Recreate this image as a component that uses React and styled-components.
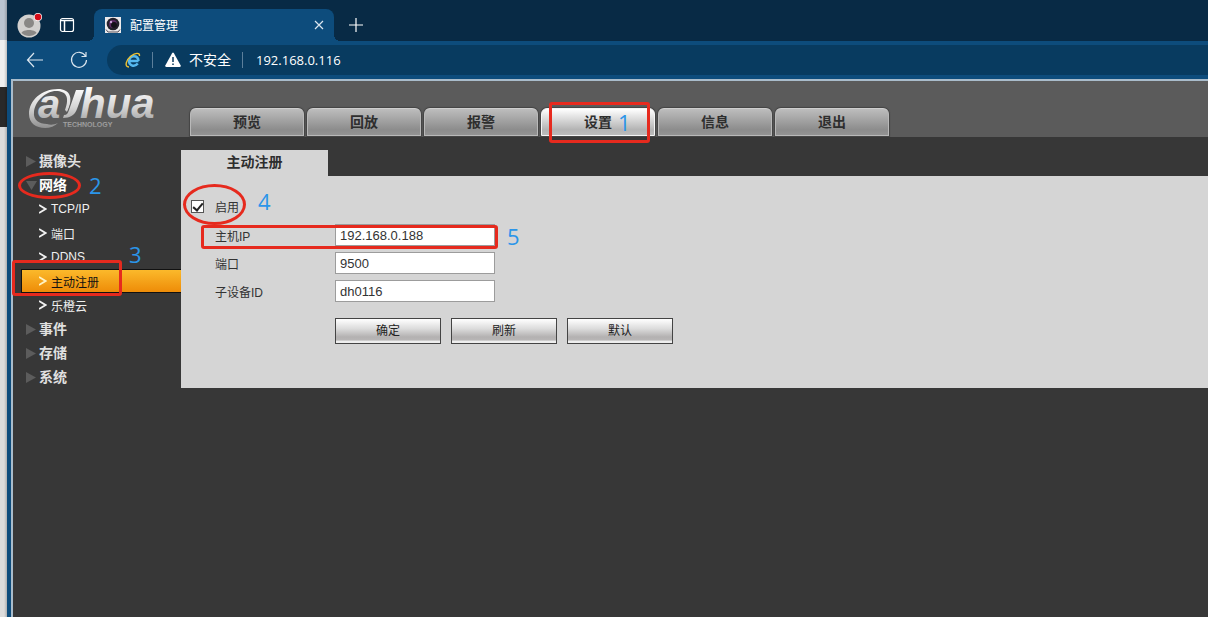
import React, { useState } from 'react';
import styled, { createGlobalStyle, css } from 'styled-components';

const NAV_ITEMS = ['预览', '回放', '报警', '设置', '信息', '退出'];

const MENU = [
  { label: '摄像头' },
  { label: '网络', open: true, children: ['TCP/IP', '端口', 'DDNS', '主动注册', '乐橙云'] },
  { label: '事件' },
  { label: '存储' },
  { label: '系统' },
];

const Logo = () => (
  <svg width="140" height="56" viewBox="0 -6 140 56" role="img" aria-label="alhua technology">
    <defs>
      <linearGradient id="metal" gradientUnits="userSpaceOnUse" x1="0" y1="2" x2="0" y2="42">
        <stop offset="0" stopColor="#fafafa" />
        <stop offset="0.45" stopColor="#d6d6d6" />
        <stop offset="1" stopColor="#8c8c8c" />
      </linearGradient>
    </defs>
    <g fill="url(#metal)" fontWeight="700" fontStyle="italic">
      <path d="M39 25C46 11 42 2 30 2C14 2 1 13 1 27C1 36 8 41 17 41C22 41 27 39 30 36C26 38 22 38 19 37C11 37 5 33 6 25C7 14 18 4 28 4C38 4 42 10 37 23Z" />
      <text x="10" y="31" fontSize="40">a</text>
      <text x="52" y="31" fontSize="42">hua</text>
      <path d="M48 3H56L49 22C47 28 42 31 35 31L36 28C39 28 40 26 41 23Z" stroke="#5b5b5b" strokeWidth="1.500" paintOrder="stroke" />
      <text x="35" y="40" fontSize="7" fontStyle="normal">TECHNOLOGY</text>
    </g>
  </svg>
);

const Profile = () => (
  <svg width="26" height="26" viewBox="0 0 26 26" aria-hidden="true">
    <circle cx="13" cy="14" r="11.500" fill="#d2d0ce" />
    <circle cx="13" cy="11" r="5" fill="#8a8886" />
    <path d="M5.500 21C6.500 17 19.500 17 20.500 21C16.500 25 9.500 25 5.500 21Z" fill="#8a8886" />
    <circle cx="22" cy="5" r="4" fill="#fff" />
    <circle cx="22" cy="5" r="3.300" fill="#d60b18" />
  </svg>
);

const TabPane = () => (
  <svg width="16" height="16" viewBox="0 0 16 16" fill="none" stroke="#fff" aria-hidden="true">
    <rect x="1.500" y="1.500" width="13" height="13" rx="2" strokeWidth="1.200" />
    <path d="M1.500 3.500H14.500M5.500 4V14" strokeWidth="1.500" />
  </svg>
);

const CameraIcon = () => (
  <svg width="16" height="16" viewBox="0 0 16 16" aria-hidden="true">
    <rect width="16" height="16" fill="#eceaec" />
    <circle cx="8" cy="7" r="6.300" fill="#24202a" />
    <circle cx="8" cy="7" r="4" fill="#5b2a63" />
    <circle cx="9" cy="8" r="3" fill="#141018" />
    <circle cx="6" cy="5" r="1.200" fill="#c9a0d8" />
    <path d="M1 12.500L3 15H13L15 12.500" stroke="#55505a" fill="none" />
  </svg>
);

const IeIcon = () => (
  <svg width="16" height="16" viewBox="0 0 16 16" fill="none" aria-hidden="true">
    <path d="M13.500 9H4.500M12.800 11.500C9 16 3.500 13 4.200 8.500C5 3 13 2.500 13.500 9" stroke="#56b8ee" strokeWidth="2.500" />
    <path d="M4 15C-1 15 1 8 6 4C10 1 15 0 14.500 4" stroke="#f0c230" strokeWidth="1.400" />
  </svg>
);

const WarningIcon = () => (
  <svg width="16" height="16" viewBox="0 0 16 16" aria-hidden="true">
    <path d="M7.200 1Q8 0 8.800 1L15.700 13.500Q16 15 14.500 15H1.500Q0 15 .3 13.500Z" fill="#fff" />
    <path d="M8 5V10M8 11.500V13" stroke="#0a3a5e" strokeWidth="1.500" />
  </svg>
);

const BackIcon = () => (
  <svg width="18" height="16" viewBox="0 0 18 16" fill="none" stroke="#dbe6ef" strokeWidth="1.200" aria-hidden="true">
    <path d="M17 8H1.500M8 1L1.500 8L8 15" />
  </svg>
);

const ReloadIcon = () => (
  <svg width="18" height="18" viewBox="0 0 18 18" fill="none" stroke="#dbe6ef" strokeWidth="1.200" aria-hidden="true">
    <path d="M15.500 5A7.500 7.500 0 1 0 16.500 9M16 1V5.500H11.500" />
  </svg>
);

const CloseIcon = () => (
  <svg width="10" height="10" viewBox="0 0 10 10" stroke="#dbe6ef" strokeWidth="1.200" aria-hidden="true">
    <path d="M1 1L9 9M9 1L1 9" />
  </svg>
);

const PlusIcon = () => (
  <svg width="14" height="14" viewBox="0 0 14 14" stroke="#fff" strokeWidth="1.200" aria-hidden="true">
    <path d="M7 0V14M0 7H14" />
  </svg>
);

const Chevron = () => (
  <svg width="8" height="10" viewBox="0 0 8 10" fill="none" stroke="currentColor" strokeWidth="1.800" aria-hidden="true">
    <path d="M0 1L6.500 5L0 9" />
  </svg>
);

const Triangle = ({ open }) => (
  <svg width="11" height="16" viewBox="0 0 11 16" fill="#5c5c5c" aria-hidden="true">
    <path d={open ? 'M0 5H11L5.500 14Z' : 'M0 4L10 9.500L0 15Z'} />
  </svg>
);

const App = () => {
  const [page, setPage] = useState('设置');
  const [section, setSection] = useState('主动注册');
  const [enabled, setEnabled] = useState(true);
  const [form, setForm] = useState({ host: '192.168.0.188', port: '9500', device: 'dh0116' });

  const handleChange = (e) => setForm({ ...form, [e.target.name]: e.target.value });

  return (
    <>
      <GlobalStyle />
      <Desktop>
        <Backdrop />
        <BrowserWindow>
          <TabStrip>
            <IconButton aria-label="profile" $width={32}><Profile /></IconButton>
            <IconButton aria-label="tabs" $width={44}><TabPane /></IconButton>
            <BrowserTab>
              <CameraIcon />
              <TabTitle>配置管理</TabTitle>
              <IconButton aria-label="close" $width={30}><CloseIcon /></IconButton>
            </BrowserTab>
            <IconButton aria-label="new tab" $width={44}><PlusIcon /></IconButton>
          </TabStrip>
          <Toolbar>
            <IconButton aria-label="back" $width={44}><BackIcon /></IconButton>
            <IconButton aria-label="reload" $width={44}><ReloadIcon /></IconButton>
            <AddressBar>
              <IeIcon />
              <Separator />
              <WarningIcon />
              <Unsafe>不安全</Unsafe>
              <Separator />
              <Address>192.168.0.116</Address>
            </AddressBar>
          </Toolbar>

          <Page>
            <Header>
              <LogoBox><Logo /></LogoBox>
              <Nav>
                {NAV_ITEMS.map((item) => (
                  <NavTab key={item} $active={item === page} onClick={() => setPage(item)}>
                    {item}
                    {item === '设置' && (
                      <>
                        <Outline $left={7} $top={-7} $width={101} $height={41} />
                        <Step $left={76} $top={-1}>1</Step>
                      </>
                    )}
                  </NavTab>
                ))}
              </Nav>
            </Header>

            <Body>
              <Sidebar>
                {MENU.map((group) => (
                  <React.Fragment key={group.label}>
                    <MenuGroup $open={group.open}>
                      <Triangle open={group.open} />
                      {group.label}
                      {group.open && (
                        <>
                          <Outline $round $left={5} $top={-1} $width={63} $height={27} />
                          <Step $left={76} $top={-2}>2</Step>
                        </>
                      )}
                    </MenuGroup>
                    {group.children?.map((child) => (
                      <MenuItem key={child} $active={child === section} onClick={() => setSection(child)}>
                        <Chevron />
                        {child}
                        {child === '主动注册' && (
                          <>
                            <Outline $left={-10} $top={-10} $width={110} $height={36} />
                            <Step $left={107} $top={-30}>3</Step>
                          </>
                        )}
                      </MenuItem>
                    ))}
                  </React.Fragment>
                ))}
              </Sidebar>

              <Content>
                <PanelTab>主动注册</PanelTab>
                <Panel>
                  <EnableRow>
                    <Checkbox
                      id="enable"
                      type="checkbox"
                      checked={enabled}
                      onChange={(e) => setEnabled(e.target.checked)}
                    />
                    <label htmlFor="enable">启用</label>
                    <Outline $round $left={2} $top={-7} $width={63} $height={41} />
                    <Step $left={77} $top={-4}>4</Step>
                  </EnableRow>
                  <Row>
                    <Label htmlFor="host">主机IP</Label>
                    <TextInput id="host" name="host" value={form.host} onChange={handleChange} />
                    <Outline $left={20} $top={4} $width={297} $height={24} />
                    <Step $left={326} $top={1}>5</Step>
                  </Row>
                  <Row>
                    <Label htmlFor="port">端口</Label>
                    <TextInput id="port" name="port" value={form.port} onChange={handleChange} />
                  </Row>
                  <Row>
                    <Label htmlFor="device">子设备ID</Label>
                    <TextInput id="device" name="device" value={form.device} onChange={handleChange} />
                  </Row>
                  <Actions>
                    <Button type="button">确定</Button>
                    <Button type="button">刷新</Button>
                    <Button type="button">默认</Button>
                  </Actions>
                </Panel>
              </Content>
            </Body>
          </Page>
        </BrowserWindow>
      </Desktop>
    </>
  );
};

export default App;

// Styled Components
const GlobalStyle = createGlobalStyle`
  * {
    box-sizing: border-box;
  }

  body {
    margin: 0;
    background: #373737;
    font-family: 'Liberation Sans', 'Noto Sans CJK SC', sans-serif;
    font-size: 12px;
  }

  button,
  input {
    font: inherit;
  }

  svg {
    display: block;
    flex: none;
  }
`;

const Desktop = styled.div`
  display: flex;
  min-height: 100vh;
  overflow: hidden;
`;

const Backdrop = styled.div`
  flex: none;
  width: 7px;
  background:
    linear-gradient(to right, transparent 4px, rgba(0, 0, 0, 0.2)),
    linear-gradient(#bcc5d1 40px, #efefef 40px, #efefef 87px, #292929 87px, #292929 127px, #dcdcdc 127px);
`;

const BrowserWindow = styled.div`
  flex: 1;
  min-width: 0;
  display: flex;
  flex-direction: column;
  background: #0d4c7c;
`;

const TabStrip = styled.div`
  display: flex;
  align-items: flex-end;
  height: 41px;
  padding-left: 6px;
  background: #082a45;
`;

const IconButton = styled.button`
  flex: none;
  display: flex;
  align-items: center;
  justify-content: center;
  width: ${({ $width }) => $width}px;
  height: 32px;
  padding: 0;
  border: none;
  background: none;
  cursor: pointer;
`;

const BrowserTab = styled.div`
  position: relative;
  display: flex;
  align-items: center;
  width: 240px;
  height: 32px;
  margin-left: 5px;
  padding-left: 11px;
  border-radius: 8px 8px 0 0;
  background: #0d4c7c;
  color: #fff;

  &::before,
  &::after {
    content: '';
    position: absolute;
    bottom: 0;
    width: 6px;
    height: 6px;
  }

  &::before {
    right: 100%;
    background: radial-gradient(circle at 0 0, transparent 6px, #0d4c7c 6px);
  }

  &::after {
    left: 100%;
    background: radial-gradient(circle at 100% 0, transparent 6px, #0d4c7c 6px);
  }
`;

const TabTitle = styled.span`
  flex: 1;
  margin-left: 9px;
  padding-bottom: 2px;
`;

const Toolbar = styled.div`
  display: flex;
  align-items: center;
  height: 38px;
  padding-left: 6px;
`;

const AddressBar = styled.div`
  flex: 1;
  display: flex;
  align-items: center;
  height: 30px;
  margin-left: 6px;
  padding-left: 18px;
  border-radius: 15px 0 0 15px;
  background: #083b60;
  color: #fff;
`;

const Separator = styled.span`
  width: 1px;
  height: 16px;
  margin: 0 12px 0 11px;
  background: #5c7f9b;
`;

const Unsafe = styled.span`
  margin-left: 8px;
  padding-bottom: 2px;
  font-size: 14px;
`;

const Address = styled.span`
  padding-left: 1px;
  font-family: 'Open Sans', sans-serif;
  font-size: 13px;
`;

const Page = styled.div`
  flex: 1;
  display: flex;
  flex-direction: column;
  margin-left: 4px;
  border-top: 2px solid #a9bccb;
  border-left: 2px solid #a9bccb;
  background: #373737;
`;

const Header = styled.header`
  display: flex;
  align-items: flex-end;
  height: 56px;
  background: #5b5b5b;
`;

const LogoBox = styled.div`
  flex: none;
  width: 177px;
  padding-left: 15px;
`;

const Nav = styled.nav`
  display: flex;
  gap: 3px;
  padding-bottom: 1px;
`;

const NavTab = styled.button`
  position: relative;
  width: 114px;
  height: 28px;
  padding: 0 0 2px;
  border: 1px solid #b9b9b9;
  border-top-color: #cfcfcf;
  border-radius: 6px 6px 0 0;
  box-shadow: 0 0 1px 1px #444;
  background: linear-gradient(#bdbdbd, #8c8c8c 80%, #939393);
  color: #2e2e2e;
  font-size: 14px;
  font-weight: bold;
  cursor: pointer;

  ${({ $active }) => $active && css`
    border-color: #f4f4f4;
    background: linear-gradient(#fff, #b3b3b3 80%, #bcbcbc);
    z-index: 1;
  `}
`;

const Body = styled.div`
  display: flex;
  align-items: flex-start;
`;

const Sidebar = styled.aside`
  flex: none;
  width: 168px;
  padding-top: 12px;
`;

const MenuGroup = styled.div`
  position: relative;
  display: flex;
  align-items: center;
  gap: 2px;
  height: 24px;
  padding: 0 0 2px 13px;
  color: ${({ $open }) => ($open ? '#fff' : '#e0e0e0')};
  font-size: 14px;
  font-weight: bold;
`;

const MenuItem = styled.button`
  position: relative;
  display: flex;
  align-items: center;
  gap: 4px;
  width: 160px;
  height: 24px;
  margin-left: 8px;
  padding: 0 0 0 17px;
  border: 1px solid transparent;
  border-right: none;
  background: none;
  color: #f0f0f0;
  text-align: left;
  cursor: pointer;

  ${({ $active }) => $active && css`
    z-index: 2;
    border-color: #111;
    background: linear-gradient(#fbb92b, #ee8c08);
    color: #111;

    svg {
      color: #fff3c4;
    }
  `}
`;

const Content = styled.main`
  flex: 1;
  min-width: 0;
  padding-top: 13px;
`;

const PanelTab = styled.h1`
  width: 147px;
  height: 26px;
  margin: 0;
  background: #d5d5d5;
  color: #2e2e2e;
  font-size: 14px;
  line-height: 24px;
  text-align: center;
`;

const Panel = styled.form`
  padding: 15px 0 44px;
  background: #d5d5d5;
  color: #333;
`;

const EnableRow = styled.div`
  position: relative;
  display: flex;
  align-items: center;
  gap: 11px;
  height: 30px;
  padding-left: 10px;
`;

const Checkbox = styled.input`
  appearance: none;
  display: grid;
  place-items: center;
  width: 13px;
  height: 13px;
  margin: 0;
  border: 1px solid #555;
  background: #fff;

  &:checked::after {
    content: '';
    width: 4px;
    height: 8px;
    border: solid #222;
    border-width: 0 2px 2px 0;
    transform: rotate(40deg);
  }
`;

const Row = styled.div`
  position: relative;
  display: flex;
  align-items: center;
  height: 28px;
  padding-left: 34px;
`;

const Label = styled.label`
  width: 120px;
`;

const TextInput = styled.input`
  width: 160px;
  height: 22px;
  padding: 0 4px;
  border: 1px solid #9c9c9c;
  border-radius: 0;
  background: #fff;
  color: #333;
  font-size: 13px;
  outline: none;
`;

const Actions = styled.div`
  display: flex;
  gap: 10px;
  margin-top: 13px;
  padding-left: 154px;
`;

const Button = styled.button`
  width: 106px;
  height: 26px;
  padding: 0 0 3px;
  border: 1px solid #444;
  border-radius: 0;
  background: linear-gradient(#fff, #dcdcdc 40%, #b3b1b1 75%, #b8b6b6 88%, #eee 92%);
  color: #222;
  cursor: pointer;
`;

const Outline = styled.span`
  position: absolute;
  z-index: 3;
  left: ${({ $left }) => $left}px;
  top: ${({ $top }) => $top}px;
  width: ${({ $width }) => $width}px;
  height: ${({ $height }) => $height}px;
  border: 3px solid #e62a1e;
  border-radius: ${({ $round }) => ($round ? '50%' : '3px')};
  pointer-events: none;
`;

const Step = styled.span`
  position: absolute;
  z-index: 3;
  left: ${({ $left }) => $left}px;
  top: ${({ $top }) => $top}px;
  color: #2b95e9;
  font-family: 'Open Sans', sans-serif;
  font-size: 22px;
  font-weight: 400;
  line-height: 28px;
`;
